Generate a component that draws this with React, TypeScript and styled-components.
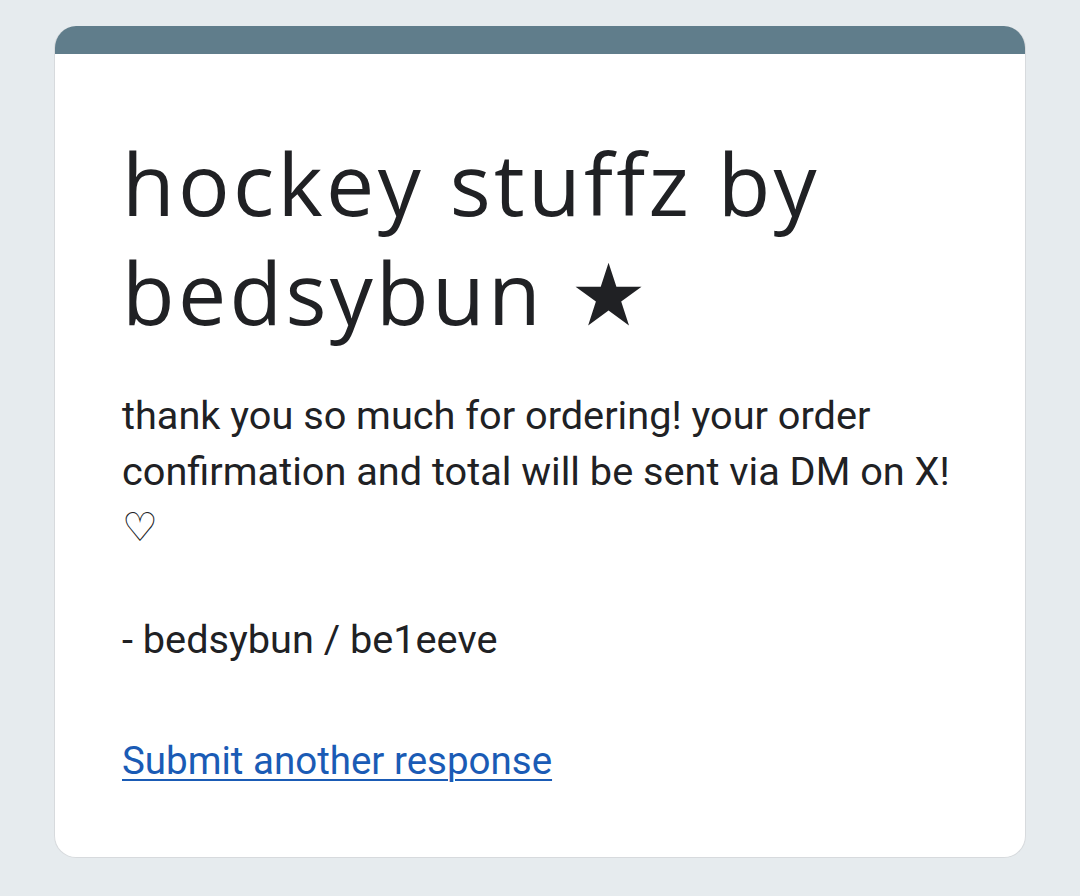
import React from "react";
import styled, { createGlobalStyle } from "styled-components";

const Global = createGlobalStyle`
  html, body { margin: 0; padding: 0; background: #e6ebee; }
  body { font-family: Roboto, "Liberation Sans", sans-serif; }
`;

const Page = styled.div`
  width: 1080px;
  height: 896px;
  box-sizing: border-box;
  padding: 26px 54px 0 54px;
  background: #e6ebee;
`;

const Card = styled.div`
  background: #fff;
  border-radius: 22px;
  overflow: hidden;
  border: 1px solid #d7dadd;
  border-top: none;
  height: 832px;
  box-sizing: border-box;
  display: flex;
  flex-direction: column;
`;

const Bar = styled.div`
  height: 28px;
  background: #607d8b;
  flex: none;
`;

const Content = styled.div`
  padding: 74px 67px 0 67px;
  display: flex;
  flex-direction: column;
`;

const Title = styled.h1`
  margin: 0;
  font-family: "Open Sans", Lato, sans-serif;
  font-weight: 400;
  font-size: 86px;
  line-height: 109px;
  color: #202124;
  letter-spacing: 3.3px;
`;

const Message = styled.div`
  margin-top: 42px;
  font-family: Roboto, sans-serif;
  font-size: 39.7px;
  line-height: 56px;
  color: #202124;
  white-space: pre-wrap;
`;

const Link = styled.a`
  margin-top: 65px;
  font-family: Roboto, sans-serif;
  font-size: 38.5px;
  line-height: 56px;
  color: #1a5bb5;
  text-decoration: underline;
  text-underline-offset: 5px;
  text-decoration-thickness: 2px;
  align-self: flex-start;
`;

export default function App() {
  return (
    <>
      <Global />
      <Page>
        <Card>
          <Bar />
          <Content>
            <Title>hockey stuffz by bedsybun ★</Title>
            <Message>
              {"thank you so much for ordering! your order confirmation and total will be sent via DM on X!\n♡\n\n- bedsybun / be1eeve"}
            </Message>
            <Link href="#">Submit another response</Link>
          </Content>
        </Card>
      </Page>
    </>
  );
}
